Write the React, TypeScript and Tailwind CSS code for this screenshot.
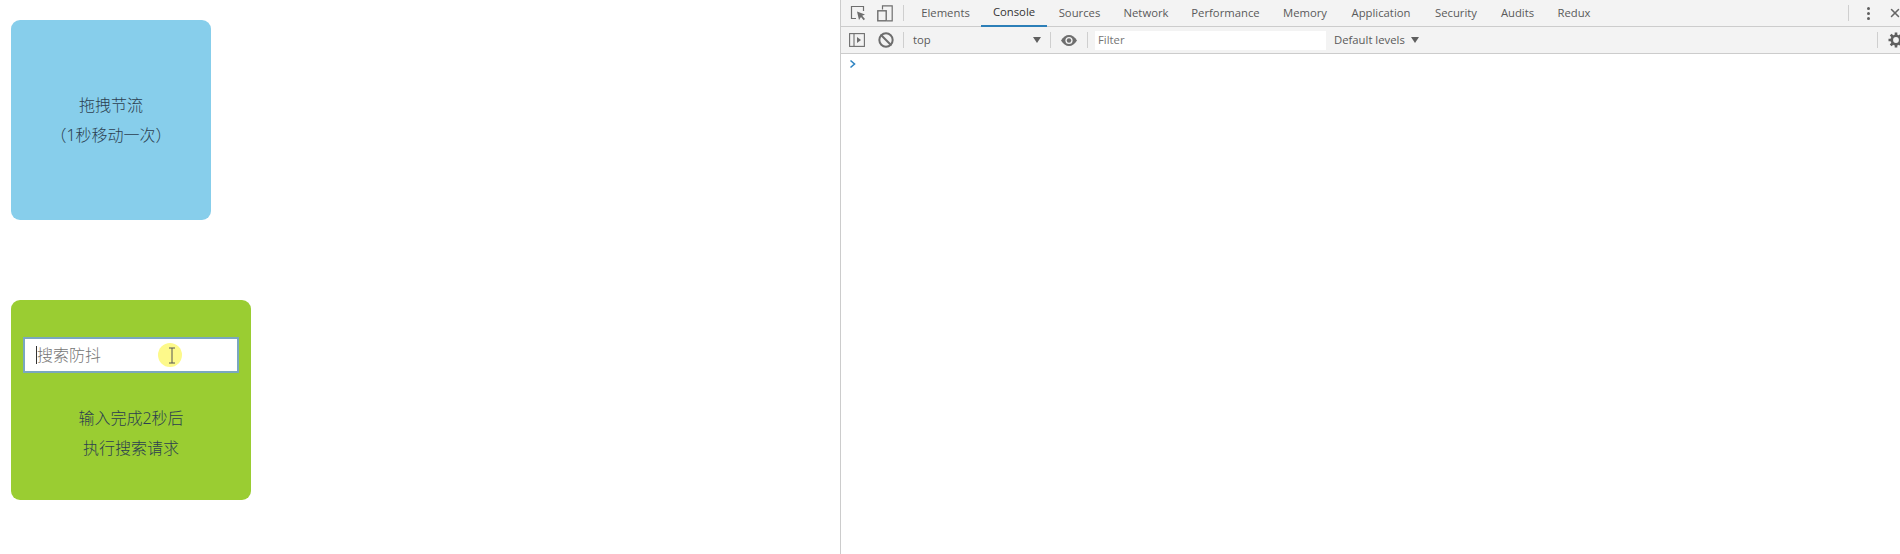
import { Ban, X } from "lucide-react";

const cjk = "font-['Noto_Sans','Noto_Sans_CJK_SC',sans-serif]";
const tabs = [
  { name: "Elements", width: "w-[71px]" },
  { name: "Console", width: "w-[66px]" },
  { name: "Sources", width: "w-[65px]" },
  { name: "Network", width: "w-[68px]" },
  { name: "Performance", width: "w-[91px]" },
  { name: "Memory", width: "w-[68px]" },
  { name: "Application", width: "w-[84px]" },
  { name: "Security", width: "w-[66px]" },
  { name: "Audits", width: "w-[57px]" },
  { name: "Redux", width: "w-[56px]" },
];

const Divider = ({ className = "" }: { className?: string }) => <div className={`w-px h-4 bg-[#cfcfcf] ${className}`} />;

const InspectIcon = () => (
  <svg width="16" height="16" viewBox="0 0 16 16" fill="none" className="text-[#6e6e6e]">
    <path d="M6 13.5H1.5V1.5H13.5V6" stroke="currentColor" strokeWidth="1.2" />
    <path d="M7 6.5 L15 9.5 L12.2 10.8 L15 14 L13.6 15.2 L11 12 L9 15 Z" fill="currentColor" />
  </svg>
);

const DeviceIcon = () => (
  <svg width="16" height="17" viewBox="0 0 16 17" fill="none" className="text-[#6e6e6e]">
    <path d="M5.5 4.5V0.8H15.2V15.8H10" stroke="currentColor" strokeWidth="1.2" />
    <rect x="0.8" y="5.8" width="8.4" height="10" stroke="currentColor" strokeWidth="1.4" />
  </svg>
);

const SidebarIcon = () => (
  <svg width="16" height="14" viewBox="0 0 16 14" fill="none" className="text-[#6e6e6e]">
    <rect x="0.6" y="0.6" width="14.8" height="12.8" stroke="currentColor" strokeWidth="1.1" />
    <path d="M5 1V13" stroke="currentColor" strokeWidth="1.1" />
    <path d="M8 4L12 7L8 10Z" fill="currentColor" />
  </svg>
);

const EyeIcon = () => (
  <svg width="16" height="11" viewBox="0 0 16 11" className="ml-[10px]">
    <path d="M0 5.5C2 2 5 0 8 0s6 2 8 5.5C14 9 11 11 8 11S2 9 0 5.5Z" fill="#6e6e6e" />
    <circle cx="8" cy="5.5" r="3.6" fill="#f3f3f3" />
    <circle cx="8" cy="5.5" r="2.2" fill="#6e6e6e" />
  </svg>
);

const GearIcon = () => (
  <svg width="16" height="16" viewBox="0 0 16 16" fill="none" className="ml-[10px] mr-[-4px]">
    <circle cx="8" cy="8" r="4.2" stroke="#5f5f5f" strokeWidth="2.6" />
    <path d="M8 0.5V3M8 13V15.5M0.5 8H3M13 8H15.5M2.7 2.7L4.5 4.5M11.5 11.5L13.3 13.3M13.3 2.7L11.5 4.5M4.5 11.5L2.7 13.3" stroke="#5f5f5f" strokeWidth="2.6" />
  </svg>
);

const App = () => {
  return (
    <div className="flex w-[1900px] h-[554px] overflow-hidden bg-white">
      {/* page side */}
      <div className={`w-[840px] shrink-0 pl-[11px] pt-[20px] text-[16px] font-light leading-[30px] text-[#2c3e50] ${cjk}`}>
        <div className="w-[200px] h-[200px] rounded-[9px] bg-[#87ceeb] flex flex-col items-center justify-center">
          <p>拖拽节流</p>
          <p>（1秒移动一次）</p>
        </div>

        <div className="relative mt-[80px] w-[240px] h-[200px] rounded-[9px] bg-[#9acd32] pt-[37px] px-[12px]">
          <div className="flex items-center w-[216px] h-[36px] bg-white border-2 border-[#7aa7c0] pl-[11px] text-[#757575] leading-none">
            <span className="w-px h-[18px] bg-[#333]" />
            <span>搜索防抖</span>
          </div>
          <div className="mt-[30px] text-center">
            <p>输入完成2秒后</p>
            <p>执行搜索请求</p>
          </div>
          {/* recorded mouse pointer */}
          <div className="absolute left-[147px] top-[43px] w-[24px] h-[24px] rounded-full bg-[#fdf98a] flex items-center justify-center pl-[3px]">
            <svg width="8" height="17" viewBox="0 0 8 17" fill="none">
              <path d="M1 1H7M4 1V16M1 16H7" stroke="#555" strokeWidth="1" />
            </svg>
          </div>
        </div>
      </div>

      {/* devtools */}
      <div className="flex-1 min-w-0 border-l border-[#cccccc] text-[11.3px] text-[#5a5a5a] font-['Open_Sans',sans-serif]">
        <div className="flex items-center h-[27px] bg-[#f3f3f3] border-b border-[#cccccc]">
          <div className="ml-[9px]"><InspectIcon /></div>
          <div className="ml-[11px]"><DeviceIcon /></div>
          <Divider className="ml-[10px]" />
          <div className="flex ml-[6px] h-full">
            {tabs.map((tab) => (
              <div
                key={tab.name}
                className={`flex items-center justify-center h-[27px] ${tab.width} ${tab.name === "Console" ? "border-b-2 border-[#2c7fb8] text-[#333]" : ""}`}
              >
                {tab.name}
              </div>
            ))}
          </div>
          <div className="flex items-center ml-auto">
            <Divider />
            <div className="flex flex-col gap-[2px] ml-[18px]">
              <span className="w-[3px] h-[3px] rounded-full bg-[#5f5f5f]" />
              <span className="w-[3px] h-[3px] rounded-full bg-[#5f5f5f]" />
              <span className="w-[3px] h-[3px] rounded-full bg-[#5f5f5f]" />
            </div>
            <X size={14} strokeWidth={2.6} className="ml-[18px] mr-[-2px] text-[#666]" />
          </div>
        </div>

        <div className="flex items-center h-[27px] bg-[#f3f3f3] border-b border-[#cccccc]">
          <div className="ml-[8px]"><SidebarIcon /></div>
          <Ban size={16} strokeWidth={3} className="ml-[13px] text-[#6e6e6e]" />
          <Divider className="ml-[9px]" />
          <div className="flex items-center justify-between w-[137px] pl-[9px]">
            <span>top</span>
            <span className="w-0 h-0 border-x-[4px] border-x-transparent border-t-[6px] border-t-[#5f5f5f]" />
          </div>
          <Divider className="ml-[9px]" />
          <EyeIcon />
          <Divider className="ml-[10px]" />
          <div className="ml-[7px] flex items-center w-[231px] h-[19px] bg-white pl-[3px] text-[#757575]">Filter</div>
          <div className="flex items-center ml-[8px]">
            <span>Default levels</span>
            <span className="ml-[6px] w-0 h-0 border-x-[4px] border-x-transparent border-t-[6px] border-t-[#5f5f5f]" />
          </div>
          <div className="flex items-center ml-auto">
            <Divider />
            <GearIcon />
          </div>
        </div>

        <div className="pl-[8px] pt-[5px]">
          <svg width="8" height="10" viewBox="0 0 8 10" fill="none">
            <path d="M1.5 1.5L5.5 5L1.5 8.5" stroke="#2f84c2" strokeWidth="1.6" />
          </svg>
        </div>
      </div>
    </div>
  );
};

export default App;
